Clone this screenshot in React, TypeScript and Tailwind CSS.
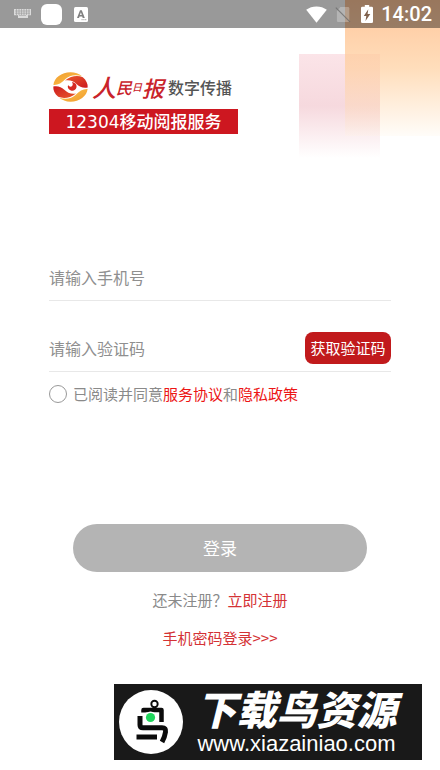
import { useState } from "react";

function StatusBar() {
  return (
    <header className="flex h-7 items-center bg-black/40 pl-3 pr-2 text-white">
      <svg className="ml-[2px] h-[10px] w-[17px]" viewBox="0 0 17 10" fill="none">
        <path d="M0 0h17v6.2H14V9H4V6.2H0z" fill="#fff" opacity=".65" />
        <path
          d="M1 2h15M1 4.2h15M5 6.4h7M2.5 0v6M5 0v6M7.5 0v6M10 0v6M12.5 0v6M15 0v6"
          stroke="#999"
          strokeWidth=".6"
        />
      </svg>
      <span className="ml-[10px] h-[21px] w-[21px] rounded-md bg-white" />
      <svg className="ml-3 h-[15px] w-[14px]" viewBox="0 0 14 15">
        <rect width="14" height="15" rx="1.5" fill="#fff" />
        <path
          d="M3 11 6 3.2h1.8L10.8 11H8.7l-.5-1.5H5.5L5 11zM6 8h1.8L6.9 5.3z"
          fill="#808080"
          fillRule="evenodd"
        />
        <path d="M7.5 12.7h5" stroke="#999" strokeWidth=".9" strokeDasharray="1.2 .6" />
      </svg>
      <div className="ml-auto flex items-center">
        <svg className="h-[17px] w-[21px]" viewBox="0 0 21 17" fill="#fff">
          <path d="M.2 3.8C3.1 1.6 6.7.4 10.5.4s7.4 1.2 10.3 3.4L10.5 16.8z" />
        </svg>
        <svg className="ml-2 h-[17px] w-4" viewBox="0 0 16 17">
          <path d="M5.5 1H13q1.3 0 1.3 1.3v12.4q0 1.3-1.3 1.3H3.2q-1.3 0-1.3-1.3V5z" fill="#fff" opacity=".27" />
          <path d="M.8 1.6 15 15.8" stroke="#6d6d6d" strokeWidth="1.1" opacity=".8" />
        </svg>
        <svg className="ml-[10px] h-[18px] w-3" viewBox="0 0 12 18">
          <path d="M3.8 0h4.4v1.8h2.5q1.3 0 1.3 1.3v13.6Q12 18 10.7 18H1.3Q0 18 0 16.7V3.1q0-1.3 1.3-1.3h2.5z" fill="#fff" />
          <path d="M7.3 4.2 2.8 11h2.5l-.8 5L9.3 9H6.6z" fill="#80624d" />
        </svg>
        <time className="ml-2 font-[Roboto,sans-serif] text-xl font-medium leading-7">14:02</time>
      </div>
    </header>
  );
}

function Emblem() {
  return (
    <svg className="h-[30px] w-[35px] shrink-0" viewBox="0 0 35 30">
      <defs>
        <linearGradient id="gold" x1="0" y1="0" x2="1" y2="1">
          <stop offset="0" stopColor="#f09a2c" />
          <stop offset="1" stopColor="#fdc750" />
        </linearGradient>
        <linearGradient id="red" x1="0" y1="0" x2="1" y2="1">
          <stop offset="0" stopColor="#ea5a2a" />
          <stop offset="1" stopColor="#cc1a20" />
        </linearGradient>
        <g id="wing">
          <path d="M.4 13C1 6 8.5.3 17.5.3 22 .3 26 1.8 29 4.2 22 2 16 3.5 12.5 7 8.5 11 5 13.3.4 13z" fill="url(#gold)" />
          <path d="M12 8.5C18 3.8 24.5 3 29.8 5.2 33.3 8 35 12 34.7 15.5 30 16.5 26.5 14.8 24 12.5 20.5 9 17 7.8 12 8.5z" fill="url(#red)" />
        </g>
      </defs>
      <use href="#wing" />
      <use href="#wing" transform="rotate(180 17.5 15)" />
      <path d="M19 10c3.3.5 5 2.7 4.5 5.3-.6 2.5-3 4-5.6 3.2-2.6-.8-3.8-3.1-2.8-5.4 1 1.6 2.8 2 3.8 1.1 1.2-1 1-2.7.1-4.2z" fill="#d62a22" />
    </svg>
  );
}

function Brand() {
  return (
    <div className="w-[189px]">
      <div className="flex h-[37px] items-center gap-1 whitespace-nowrap pl-1 pr-[6px]">
        <Emblem />
        <span className="flex flex-1 items-center font-medium italic leading-none text-[#c9232b]">
          <span className="text-2xl">人</span>
          <span className="text-base">民</span>
          <span className="text-[10px]">日</span>
          <span className="text-[22px]">报</span>
        </span>
        <span className="text-base font-medium leading-none text-[#555]">数字传播</span>
      </div>
      <div className="mt-1 h-[25px] bg-[#cd1720] text-center text-[17px] font-medium leading-6 text-white">
        <span className="font-['DejaVu_Sans',sans-serif]">12304</span>移动阅报服务
      </div>
    </div>
  );
}

function Watermark() {
  return (
    <footer className="ml-auto mr-[18px] flex h-[76px] w-[308px] items-center bg-[#191919] pl-[5px] pr-3 text-white">
      <svg className="h-16 w-16 shrink-0" viewBox="0 0 64 64" fill="none">
        <circle cx="32" cy="32" r="32" fill="#fff" />
        <g stroke="#0b0b0b" strokeLinejoin="round">
          <circle cx="35.5" cy="14" r="3.2" strokeWidth="1.9" />
          <path d="M24.5 22.5V20H42.5v12" strokeWidth="4.5" />
          <path d="M21 26v9c0 2 1 2.8 3 2.8h19c3 0 4 1.2 3.5 4.2-.5 3.5-1.5 6.5-3.5 10" strokeWidth="5" />
          <path d="M17.5 47H38" strokeWidth="5" />
        </g>
        <circle cx="31.5" cy="27.5" r="6" fill="#fff" />
        <circle cx="31.5" cy="27.5" r="4.6" fill="#20d65c" />
      </svg>
      <div className="flex flex-1 flex-col items-center whitespace-nowrap">
        <strong className="text-[40px] font-black italic leading-10">下载鸟资源</strong>
        <a href="#site" className="mt-1 font-['Liberation_Sans',sans-serif] text-[22px] leading-6">
          www.xiazainiao.com
        </a>
      </div>
    </footer>
  );
}

export default function App() {
  const [phone, setPhone] = useState("");
  const [code, setCode] = useState("");
  const [agreed, setAgreed] = useState(false);

  return (
    <div className="relative isolate min-h-screen bg-white font-['Noto_Sans_CJK_SC',sans-serif] text-[15px] leading-6 text-[#8a8a8a]">
      <div className="absolute right-[60px] top-[54px] -z-10 h-[104px] w-[81px] bg-linear-to-b from-[#fbe4e8] via-[#f6d9de] to-white" />
      <div className="absolute right-0 top-0 -z-10 h-[136px] w-[95px] bg-linear-to-b from-[#ffc090]/90 via-[#ffcf9e]/70 to-[#fff3e0]/20" />
      <StatusBar />
      <main>
        <div className="px-[49px] pt-10">
          <Brand />
          <form onSubmit={(e) => e.preventDefault()}>
            <div className="mt-[119px] flex h-12 items-center border-b border-[#e8e8e8]">
              <input
                type="tel"
                aria-label="请输入手机号"
                placeholder="请输入手机号"
                value={phone}
                onChange={(e) => setPhone(e.target.value)}
                className="w-full min-w-0 text-base outline-none placeholder:text-[#8f8f8f]"
              />
            </div>
            <div className="mt-[23px] flex h-12 items-center border-b border-[#e8e8e8]">
              <input
                type="text"
                aria-label="请输入验证码"
                placeholder="请输入验证码"
                value={code}
                onChange={(e) => setCode(e.target.value)}
                className="min-w-0 flex-1 text-base outline-none placeholder:text-[#8f8f8f]"
              />
              <button type="button" className="h-8 w-[86px] rounded-lg bg-[#c11a1c] text-white">
                获取验证码
              </button>
            </div>
            <div className="mt-[10px] flex items-center gap-[6px] whitespace-nowrap">
              <input
                id="agree"
                type="checkbox"
                checked={agreed}
                onChange={(e) => setAgreed(e.target.checked)}
                className="h-[18px] w-[18px] shrink-0 appearance-none rounded-full border border-[#999] checked:bg-[#c11a1c]"
              />
              <label htmlFor="agree">
                已阅读并同意
                <a href="#terms" className="text-[#ec1515]">服务协议</a>和
                <a href="#privacy" className="text-[#ec1515]">隐私政策</a>
              </label>
            </div>
          </form>
        </div>
        <div className="px-[73px] pt-[118px] text-center">
          <button type="button" className="h-12 w-full rounded-full bg-[#b4b4b4] text-[17px] text-white">
            登录
          </button>
          <p className="mt-4">
            还未注册？<a href="#register" className="text-[#d43235]">立即注册</a>
          </p>
          <a href="#password" className="mt-[14px] inline-block text-[#d43235]">
            手机密码登录&gt;&gt;&gt;
          </a>
        </div>
      </main>
      <div className="pb-[10px] pt-[34px]">
        <Watermark />
      </div>
    </div>
  );
}
